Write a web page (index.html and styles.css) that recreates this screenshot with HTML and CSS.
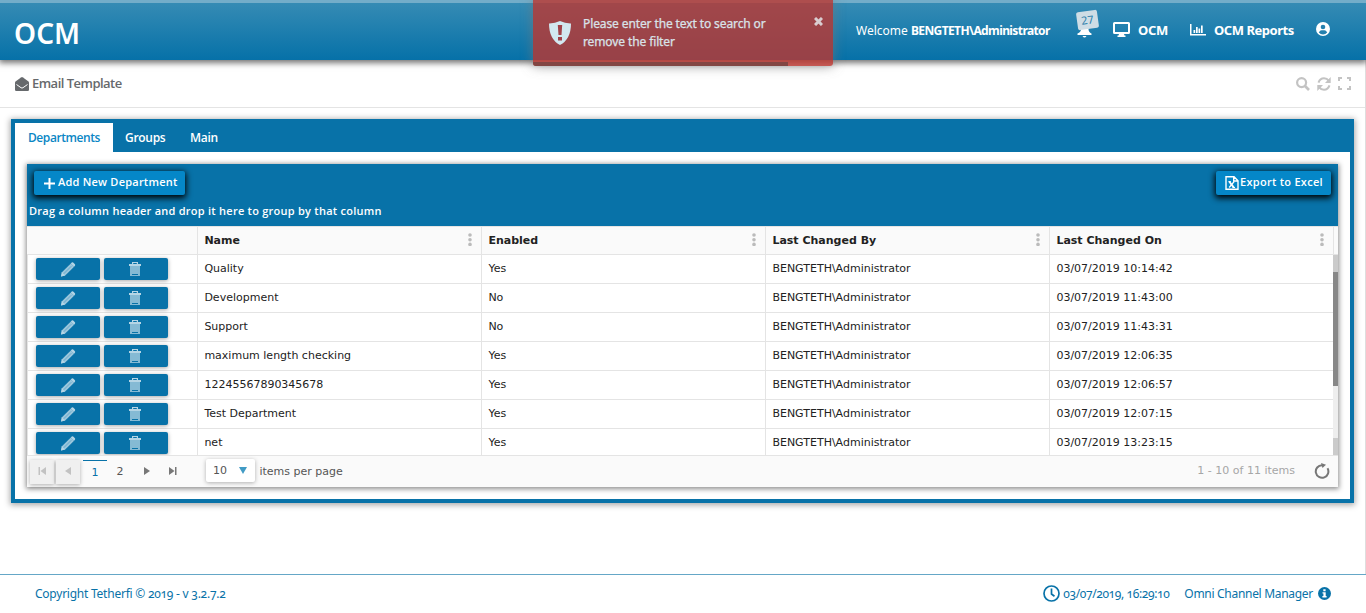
FILE: index.html
```html
<!DOCTYPE html>
<html lang="en">
<head>
<meta charset="utf-8">
<title>Email Template</title>
<link rel="stylesheet" href="styles.css">
</head>
<body>
<svg class="defs" width="0" height="0">
  <symbol id="pencil" viewBox="0 0 16 16"><path fill-opacity=".85" d="M.5 15.500l1-4.500L11 1.500l3.500 3.500L5 14.500z"/><path d="M11 1.500l1-.9q.8-.6 1.500 0l1.900 1.900q.6.700 0 1.500l-.9 1zM.5 15.500l1-4.500L5 14.500z"/><path stroke="#0872a8" stroke-opacity=".5" stroke-width=".8" d="M3.500 12.500l8-8"/></symbol>
  <symbol id="trash" viewBox="0 0 12 14"><path d="M0 2h3V0h6v2h3v2H0zm4.200 0h3.600V1H4.200z"/><path fill-opacity=".72" fill-rule="evenodd" d="M1 4h10v10H1zm2 8v1h6v-1z"/></symbol>
  <symbol id="dots" viewBox="0 0 4 13"><circle cx="2" cy="2" r="1.800"/><circle cx="2" cy="6.700" r="1.800"/><circle cx="2" cy="11.400" r="1.800"/></symbol>
</svg>
<div class="page">
  <header class="topbar">
    <div class="brand">OCM</div>
    <nav class="topnav">
      <span class="welcome">Welcome <b>BENGTETH\Administrator</b></span>
      <span class="bell"><svg width="16" height="20" viewBox="0 0 16 20"><path fill="#fff" d="M8 0C5 1 4 4 4 7q0 3-3.500 4.500V13h14v-1.500Q11.500 10 11.500 7C11.500 4 11 1 8 0zM5.500 14h4q-2 3-4 0z"/></svg><span class="badge">27</span></span>
      <a class="monitor"><svg width="17" height="15" viewBox="0 0 17 15"><path fill="#fff" fill-rule="evenodd" d="M1.500 0h14Q17 0 17 1.500v9q0 1.500-1.500 1.500H11l.5 1.500h1V15h-8v-1.500h1L6 12H1.500Q0 12 0 10.500v-9Q0 0 1.500 0zM2 2v8h13V2z"/></svg><b class="n1">OCM</b></a>
      <a class="reports"><svg width="16" height="12" viewBox="0 0 16 12"><path fill="#fff" d="M0 0h1.500v10H16v1.500H0zM3.500 6h1.700v3H3.500zM6 3h1.700v6H6zM8.500 4.500h1.700V9H8.500zM11 1.500h1.700V9H11z"/></svg><b class="n2">OCM Reports</b></a>
      <svg class="user" width="14" height="14" viewBox="0 0 14 14"><circle cx="7" cy="7" r="7" fill="#fff"/><circle cx="7" cy="5" r="2.300" fill="#2580ae"/><path fill="#2580ae" d="M2.800 10.500Q4 8.200 5.500 8.200h3q1.500 0 2.700 2.300Q9.500 12.500 7 12.500T2.800 10.500z"/></svg>
    </nav>
  </header>
  <div class="content">
  <div class="subhead">
    <div class="title"><svg width="14" height="14" viewBox="0 0 14 14"><path fill="#66696c" d="M0 5.500Q0 5 .5 4.600L6 .4Q7 -.3 8 .4l5.500 4.200q.5.400.5.900v7.200Q14 14 12.700 14H1.300Q0 14 0 12.700z"/><path fill="none" stroke="#fff" d="M1.500 7.500L6 10.700q1 .7 2 0l4.500-3.200"/></svg><span class="title-text">Email Template</span></div>
    <div class="tools">
      <svg width="14" height="14" viewBox="0 0 14 14"><circle cx="5.600" cy="5.600" r="4.500" fill="none" stroke="#c3c3c3" stroke-width="2.200"/><path stroke="#c3c3c3" stroke-width="2.700" d="M9 9l4 4"/></svg>
      <svg width="14" height="14" viewBox="0 0 14 14"><path fill="none" stroke="#c3c3c3" stroke-width="2" d="M1.500 5.600Q3 1.300 7 1.300q3 0 4.700 2.400M12.500 8.400Q11 12.700 7 12.700q-3 0-4.700-2.400"/><path fill="#c3c3c3" d="M13.700 0v6H8zM.3 14V8H6z"/></svg>
      <svg width="13" height="13" viewBox="0 0 13 13"><path fill="none" stroke="#c3c3c3" stroke-width="2" d="M1 4V1h3M9 1h3v3M12 9v3H9M4 12H1V9"/></svg>
    </div>
  </div>
  <main class="card">
    <div class="tabs"><span class="tab active">Departments</span><span class="tab groups">Groups</span><span class="tab main">Main</span></div>
    <section class="grid">
      <div class="toolbar">
        <div class="buttons">
          <button class="btn add"><svg width="11" height="11" viewBox="0 0 11 11"><path stroke="#fff" stroke-width="2" d="M5.500 0v11M0 5.500h11"/></svg><span>Add New Department</span></button>
          <button class="btn export"><svg width="14" height="14" viewBox="0 0 14 14"><path fill="none" stroke="#fff" stroke-width="1.400" d="M1 .7h8l4 4v8.600H1zM8.700.7V5H13"/><path stroke="#fff" stroke-width="2" d="M4.200 5.500l4.600 6"/><path stroke="#fff" stroke-width="1.200" d="M9.200 5.500L4.200 11.500M3.500 5.500h2.300M7.500 11.500H10"/></svg><span>Export to Excel</span></button>
        </div>
        <div class="grouping"><span>Drag a column header and drop it here to group by that column</span></div>
      </div>
      <div class="row head"><div></div>
        <div><span>Name</span><svg class="dots"><use href="#dots"/></svg></div>
        <div><span>Enabled</span><svg class="dots"><use href="#dots"/></svg></div>
        <div><span>Last Changed By</span><svg class="dots"><use href="#dots"/></svg></div>
        <div><span>Last Changed On</span><svg class="dots"><use href="#dots"/></svg></div><div class="corner"></div>
      </div>
      <div class="body">
        <div class="rows" id="rows"></div>
        <div class="scroll"><i class="cap"></i><i class="thumb"></i><i class="track"></i><i class="cap end"></i></div>
      </div>
      <div class="pager">
        <span class="pg off"><svg width="8" height="8" viewBox="0 0 8 8"><path d="M.5 0h1.500v8H.5zM8 0v8L2.500 4z"/></svg></span>
        <span class="pg off"><svg width="6" height="8" viewBox="0 0 6 8"><path d="M6 0v8L0 4z"/></svg></span>
        <span class="pg cur">1</span><span class="pg two">2</span>
        <span class="pg nx"><svg width="6" height="8" viewBox="0 0 6 8"><path d="M0 0v8l6-4z"/></svg></span>
        <span class="pg last"><svg width="8" height="8" viewBox="0 0 8 8"><path d="M0 0v8l5.500-4zM6 0h1.500v8H6z"/></svg></span>
        <span class="size"><span>10</span><svg width="8" height="7" viewBox="0 0 8 7"><path fill="#419bc5" d="M0 0h8L4 7z"/></svg></span>
        <span class="ipp">items per page</span>
        <span class="count">1 - 10 of 11 items</span>
        <svg class="reload" width="16" height="16" viewBox="0 0 16 16"><path fill="none" stroke="#777" stroke-width="2" d="M13.500 5.300A6.300 6.300 0 1 1 8 2.200"/><path fill="#777" d="M7 0l5 1.800L8.500 5z"/></svg>
      </div>
    </section>
  </main>
  </div>
  <footer class="footer">
    <span class="copy">Copyright Tetherfi © 2019 - v 3.2.7.2</span>
    <span class="right"><svg width="17" height="17" viewBox="0 0 17 17"><circle cx="8.500" cy="8.500" r="7.500" fill="none" stroke="#0872a8" stroke-width="1.700"/><path fill="none" stroke="#0872a8" stroke-width="1.700" d="M8.500 3.500V9l3 2.200"/></svg><span class="date">03/07/2019, 16:29:10</span><span class="omni">Omni Channel Manager</span><svg width="13" height="13" viewBox="0 0 13 13"><circle cx="6.500" cy="6.500" r="6.500" fill="#0872a8"/><path fill="#fff" d="M5.300 2.200h2.300v2H5.300zM4.500 5.200h3.200v3.900h.9v1.300H4.400V9.100h1V6.500h-.9z"/></svg></span>
  </footer>
</div>
<div class="toast">
  <svg class="shield" width="22" height="24" viewBox="0 0 22 24"><path fill="#d2e8f0" d="M11 0q5 2.500 11 2.400Q22 18 11 24 0 18 0 2.400 6 2.500 11 0z"/><path fill="#a1434a" d="M8.800 4h4.400l-.7 10h-3zM9 16h4v3.500H9z"/></svg>
  <div class="toast-text">Please enter the text to search or<br>remove the filter</div>
  <svg class="x" width="9" height="9" viewBox="0 0 9 9"><path stroke="#d9cdd0" stroke-width="3" d="M1 1l7 7M8 1L1 8"/></svg>
  <i class="progress"></i>
</div>
<script src="app.js"></script>
</body>
</html>
```
FILE: styles.css
```css
* { box-sizing: border-box; }
body { margin: 0; font-family: "Noto Sans", sans-serif; overflow: hidden; background: #fff; }
.defs { position: absolute; }
.page { height: 613px; display: flex; flex-direction: column; }
span { white-space: nowrap; }
svg { flex: none; }
.topbar { height: 60px; flex: none; border-top: 3px solid #73adc9; background: linear-gradient(#358bb4, #0671a8); color: #fff; display: flex; justify-content: space-between; padding: 0 36px 0 14px; box-shadow: 0 2px 6px 1px rgba(0,0,0,.55); position: relative; }
.brand { font: 600 28px/60px "Noto Sans", sans-serif; letter-spacing: .1px; }
.topnav { display: flex; align-items: center; height: 54px; font-size: 13px; }
.welcome { width: 221px; font-size: 12px; }
.welcome b { letter-spacing: -.6px; }
.bell { position: relative; width: 36px; height: 20px; margin-top: 4px; }
.bell svg { display: block; }
.badge { position: absolute; left: 0; top: -11px; width: 21px; height: 18px; border-radius: 2px; background: #cfdde5; color: #2b7fab; font-size: 11px; line-height: 18px; text-align: center; transform: rotate(-8deg); }
.monitor, .reports { display: flex; align-items: center; margin-top: -1px; }
.user { margin-top: -2px; }
.monitor { width: 77px; gap: 8px; }
.reports { width: 126px; gap: 8px; }
.n1 { letter-spacing: -.3px; }
.n2 { letter-spacing: -.46px; }
.content { flex: 1; border-right: 1px solid #dedede; }
.subhead { height: 48px; border-bottom: 1px solid #e4e4e4; display: flex; align-items: center; justify-content: space-between; padding: 0 14px 0 15px; color: #66696c; }
.title, .tools { display: flex; align-items: center; gap: 3px; }
.tools { gap: 7px; }
.title-text { font: 600 13px/18px "Open Sans", sans-serif; letter-spacing: -.52px; margin-top: -2px; }
.card { height: 384px; margin: 11px 11px 0 11px; border: 4px solid #0872a8; box-shadow: 0 1px 6px 1px rgba(0,0,0,.35); }
.tabs { height: 29px; background: #0872a8; display: flex; color: #fff; font: 600 12px/30px "Open Sans", sans-serif; letter-spacing: -.3px; }
.tab { padding-left: 12px; }
.tab.active { background: #fff; color: #0a86c4; width: 98px; padding-left: 13px; letter-spacing: -.42px; }
.tab.groups { width: 65px; }
.grid { margin: 12px 12px 0; height: 323px; box-shadow: 0 1px 5px 1px rgba(0,0,0,.45); }
.toolbar { background: #0872a8; height: 62px; color: #fff; font: 600 11px "Open Sans", sans-serif; letter-spacing: .25px; }
.buttons { display: flex; justify-content: space-between; padding: 7px 7px 0; }
.btn { display: flex; align-items: center; height: 24px; border: 0; border-radius: 2px; background: #0587c8; color: #fff; font: 600 11px "Open Sans", sans-serif; letter-spacing: .22px; box-shadow: 0 2px 6px 1px #000; }
.btn span { margin-top: -3px; }
.add { width: 151px; padding: 0 0 0 10px; gap: 3px; }
.export { width: 115px; padding: 0 0 0 9px; gap: 1px; letter-spacing: .28px; }
.grouping { padding-left: 2px; height: 31px; line-height: 31px; }
.row { display: grid; grid-template-columns: 170px 284px 284px 284px 284px; height: 29px; font: 11px/27px "DejaVu Sans", sans-serif; color: #222; }
.row > div { border-bottom: 1px solid #e4e4e4; border-left: 1px solid #e4e4e4; padding-left: 6.400px; }
.head { grid-template-columns: 170px 284px 284px 284px 284px 5px; background: #fafafa; border-top: 1px solid #e4e4e4; font-weight: 700; }
.head > div { display: flex; justify-content: space-between; align-items: center; padding-right: 9px; line-height: 25px; }
.head .dots { margin-top: -2px; }
.head > .corner { padding: 0; }
.head > div:first-child { border-left: 0; }
.dots { width: 4px; height: 13px; fill: #bbb; }
.body { height: 200px; overflow: hidden; display: flex; }
.rows { width: 1306px; background: #fff; }
.row > .actions { display: flex; gap: 4px; padding: 3px 0 0 8px; }
.act { width: 64px; height: 22px; border-radius: 2px; background: #0872a8; box-shadow: 0 1px 4px rgba(0,0,0,.35); display: flex; align-items: center; justify-content: center; fill: #b5d5e5; }
.pencil { width: 16px; height: 15px; }
.trash { width: 12px; height: 14px; margin-right: 2px; }
.scroll { width: 5px; display: flex; flex-direction: column; }
.cap { height: 17px; background: #cbcbcb; }
.thumb { height: 114px; background: #888; }
.track { flex: 1; background: #eee; }
.pager { height: 32px; background: #fafafa; border-top: 1px solid #e4e4e4; display: flex; font: 11px/31px "DejaVu Sans", sans-serif; color: #555; padding-left: 3px; align-items: center; }
.pg { width: 24px; height: 24px; margin-right: 2px; display: flex; align-items: center; justify-content: center; fill: #777; }
.pg.off { background: #f0f0f0; fill: #c2c2c2; box-shadow: 0 1px 4px rgba(0,0,0,.3); }
.pager > .pg.cur { color: #0872a8; border-top: 1px solid #0872a8; margin-left: 1px; margin-right: 1px; }
.pager > .pg svg { margin-top: -1px; }
.pg.nx { margin-left: 1px; }
.size { width: 49px; height: 23px; margin-top: -2px; margin-left: 19px; background: #fff; box-shadow: 0 1px 4px rgba(0,0,0,.3); border-radius: 2px; display: flex; align-items: center; justify-content: space-between; padding: 0 8px 0 7px; margin-right: 4.400px; }
.count { margin-left: auto; margin-top: -2px; color: #a6a6a6; margin-right: 19px; }
.reload { margin-right: 8px; margin-top: -2px; }
.footer { height: 39px; flex: none; border-top: 1px solid #65a7c7; color: #0872a8; display: flex; align-items: center; justify-content: space-between; padding: 0 35px; font-size: 12px; font-variant-numeric: oldstyle-nums; }
.footer > span { margin-top: -2px; }
.right { display: flex; align-items: center; gap: 3px; }
.copy { letter-spacing: -.24px; }
.date { width: 109px; letter-spacing: -.38px; }
.omni { margin-left: 9px; margin-right: 2px; letter-spacing: -.3px; }
.toast { position: absolute; left: 533px; top: 0; width: 300px; height: 66px; background: rgba(189,54,47,.8); color: #d9e3e9; border-radius: 0 0 3px 3px; box-shadow: 0 0 12px rgba(120,120,120,.7); padding: 15px 10px 0 16px; display: flex; font: 12px/18px "Noto Sans", sans-serif; letter-spacing: -.11px; -webkit-text-stroke: .25px #d9e3e9; }
.shield { margin-top: 6px; }
.toast-text { margin-left: 12px; flex: 1; }
.x { margin-top: 2px; }
.progress { position: absolute; left: 0; bottom: 0; width: 255px; height: 4px; background: #824643; border-bottom-left-radius: 3px; }
```
FILE: app.js
```js
const data = [
  ["Quality", "Yes", "03/07/2019 10:14:42"],
  ["Development", "No", "03/07/2019 11:43:00"],
  ["Support", "No", "03/07/2019 11:43:31"],
  ["maximum length checking", "Yes", "03/07/2019 12:06:35"],
  ["12245567890345678", "Yes", "03/07/2019 12:06:57"],
  ["Test Department", "Yes", "03/07/2019 12:07:15"],
  ["net", "Yes", "03/07/2019 13:23:15"]
];
document.getElementById("rows").innerHTML = data.map(([name, enabled, date]) => `<div class="row">
<div class="actions"><span class="act"><svg class="pencil"><use href="#pencil"/></svg></span><span class="act"><svg class="trash"><use href="#trash"/></svg></span></div>
<div><span>${name}</span></div><div><span>${enabled}</span></div><div><span>BENGTETH\\Administrator</span></div><div><span>${date}</span></div></div>`).join("");
```
